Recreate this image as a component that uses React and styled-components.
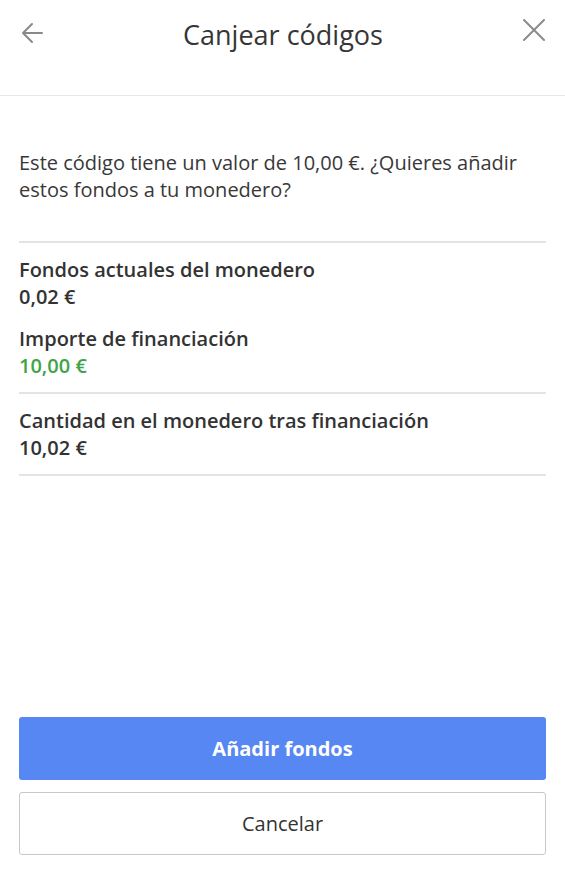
import styled, { createGlobalStyle } from "styled-components";

const GlobalStyle = createGlobalStyle`
    html, body {
        margin: 0;
        padding: 0;
        background: #fff;
    }
    body {
        font-family: "Open Sans", "Noto Sans", sans-serif;
        color: #333;
    }
`

const Page = styled.div`
    width: 565px;
    height: 880px;
    display: flex;
    flex-direction: column;
    background: #fff;
`
const Header = styled.header`
    height: 96px;
    border-bottom: 1px solid #e6e6e6;
    display: flex;
    align-items: flex-start;
    justify-content: space-between;
    padding: 0 19px 0 20px;
    box-sizing: border-box;
`
const IconButton = styled.button`
    width: 24px;
    height: 24px;
    margin-top: ${props => props.top}px;
    padding: 0;
    border: none;
    background: none;
    display: flex;
    align-items: center;
    justify-content: center;
    cursor: pointer;
`
const Title = styled.h1`
    margin: 17px 0 0 0;
    font-size: 27px;
    font-weight: 400;
    color: #363636;
    line-height: 36px;
`
const Content = styled.main`
    flex: 1;
    padding: 0 19px;
    display: flex;
    flex-direction: column;
`
const Intro = styled.p`
    margin: 53px 0 0 0;
    padding-bottom: 38px;
    font-size: 20px;
    line-height: 27px;
    color: #383838;
    border-bottom: 2px solid #e4e4e4;
`
const Section = styled.div`
    padding: 13px 0;
    border-bottom: 2px solid #e4e4e4;
    display: flex;
    flex-direction: column;
    gap: 15px;
`
const Item = styled.div`
    display: flex;
    flex-direction: column;
`
const Label = styled.span`
    font-size: 20px;
    font-weight: 600;
    line-height: 27px;
    color: #333;
`
const Value = styled.span`
    font-size: 20px;
    font-weight: 600;
    line-height: 27px;
    color: ${props => props.green ? "#3fa448" : "#333"};
`
const Actions = styled.div`
    margin-top: auto;
    padding: 0 19px 25px;
    display: flex;
    flex-direction: column;
    gap: 12px;
`
const Button = styled.button`
    height: 63px;
    border-radius: 3px;
    font-family: inherit;
    font-size: 20px;
    cursor: pointer;
    background: ${props => props.primary ? "#5787f2" : "#fff"};
    color: ${props => props.primary ? "#fff" : "#333"};
    font-weight: ${props => props.primary ? 700 : 400};
    border: ${props => props.primary ? "none" : "1px solid #c8c8c8"};
`

const App = () => {
    return (
        <>
            <GlobalStyle />
            <Page>
                <Header>
                    <IconButton top={21}>
                        <svg width="24" height="24" viewBox="0 0 24 24" fill="none" stroke="#8a8a8a" strokeWidth="2" strokeLinecap="round" strokeLinejoin="round">
                            <path d="M22 12H3M12 3l-9 9 9 9" />
                        </svg>
                    </IconButton>
                    <Title>Canjear códigos</Title>
                    <IconButton top={18}>
                        <svg width="24" height="24" viewBox="0 0 24 24" fill="none" stroke="#8a8a8a" strokeWidth="2" strokeLinecap="round">
                            <path d="M2 2l20 20M22 2L2 22" />
                        </svg>
                    </IconButton>
                </Header>
                <Content>
                    <Intro>
                        Este código tiene un valor de 10,00 €. ¿Quieres añadir estos fondos a tu monedero?
                    </Intro>
                    <Section>
                        <Item>
                            <Label>Fondos actuales del monedero</Label>
                            <Value>0,02 €</Value>
                        </Item>
                        <Item>
                            <Label>Importe de financiación</Label>
                            <Value green>10,00 €</Value>
                        </Item>
                    </Section>
                    <Section>
                        <Item>
                            <Label>Cantidad en el monedero tras financiación</Label>
                            <Value>10,02 €</Value>
                        </Item>
                    </Section>
                </Content>
                <Actions>
                    <Button primary>Añadir fondos</Button>
                    <Button>Cancelar</Button>
                </Actions>
            </Page>
        </>
    )
}

export default App;
